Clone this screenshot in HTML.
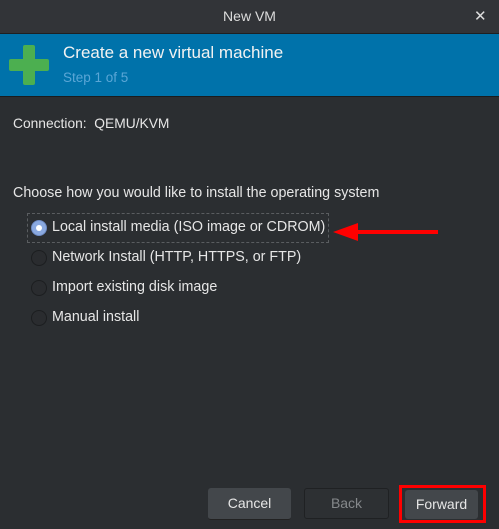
<!DOCTYPE html>
<html><head><meta charset="utf-8"><style>
body{margin:0;width:499px;height:529px;background:#2b2e31;font-family:"Liberation Sans",sans-serif;color:#e6e6e6;position:relative;overflow:hidden;font-size:14.3px}
.a{position:absolute;white-space:nowrap}
.r{position:absolute;width:14px;height:14px;border-radius:50%;border:1px solid #1c1e20;background:#2a2c2f;left:31px}
.btn{position:absolute;top:488px;height:31px;border-radius:3px;text-align:center;line-height:31px;font-size:14px}
</style></head><body>
<div class="a" style="left:0;top:0;width:499px;height:33px;background:#323438;border-bottom:1px solid #1e2022"></div>
<div class="a" style="left:0;top:8px;width:499px;text-align:center;font-size:14px;color:#dcdcdc">New VM</div>
<div class="a" style="left:474px;top:7px;font-size:15px;color:#ddd">✕</div>
<div class="a" style="left:0;top:34px;width:499px;height:62px;background:#0072aa;border-bottom:1px solid #1a1c1e"></div>
<div class="a" style="left:23px;top:45px;width:12px;height:40px;background:#4caf50;border-radius:2px"></div>
<div class="a" style="left:9px;top:59px;width:40px;height:12px;background:#4caf50;border-radius:2px"></div>
<div class="a" style="left:63px;top:43px;font-size:17px;color:#f2f2f2">Create a new virtual machine</div>
<div class="a" style="left:63px;top:70px;font-size:13.5px;color:#5aa6d6">Step 1 of 5</div>
<div class="a" style="left:13px;top:116px;font-size:13.8px">Connection:&nbsp; QEMU/KVM</div>
<div class="a" style="left:13px;top:185px">Choose how you would like to install the operating system</div>
<div class="a" style="left:27px;top:213px;width:300px;height:28px;border:1px dashed #5a5d60"></div>
<div class="r" style="top:220px;background:#8aa9e0;border-color:#6f8cc5"></div>
<div class="a" style="left:36px;top:225px;width:6px;height:6px;border-radius:50%;background:#fff"></div>
<div class="a" style="left:52px;top:219px">Local install media (ISO image or CDROM)</div>
<div class="r" style="top:250px"></div><div class="a" style="left:52px;top:249px">Network Install (HTTP, HTTPS, or FTP)</div>
<div class="r" style="top:280px"></div><div class="a" style="left:52px;top:279px">Import existing disk image</div>
<div class="r" style="top:310px"></div><div class="a" style="left:52px;top:309px">Manual install</div>
<svg class="a" style="left:330px;top:220px" width="110" height="24"><rect x="20" y="10" width="88" height="4" fill="#f00"/><polygon points="3,12 28,3 28,21" fill="#f00"/></svg>
<div class="btn" style="left:208px;width:83px;background:#43474b;border:0;border-bottom:1px solid #222">Cancel</div>
<div class="btn" style="left:304px;width:83px;background:#2d3033;border:1px solid #1f2123;color:#85888b;height:29px;line-height:29px">Back</div>
<div class="a" style="left:399px;top:485px;width:81px;height:32px;border:3px solid #f00"></div>
<div class="btn" style="left:405px;width:73px;background:#43474b;top:490px;height:29px;line-height:29px">Forward</div>
</body></html>
